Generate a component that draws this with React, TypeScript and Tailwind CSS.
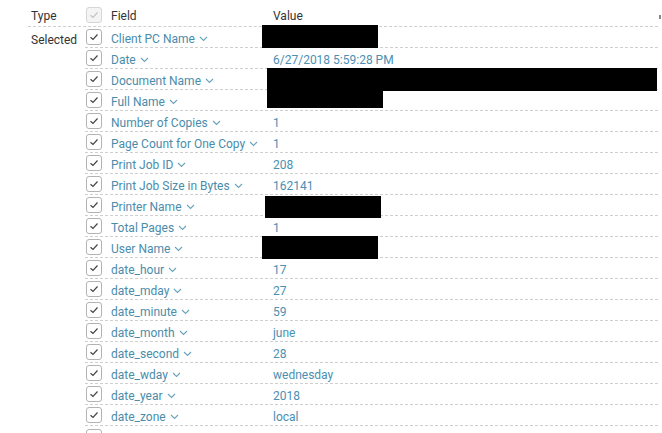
import React from "react";

const rows: [string, string][] = [
  ["Client PC Name", ""],
  ["Date", "6/27/2018 5:59:28 PM"],
  ["Document Name", ""],
  ["Full Name", ""],
  ["Number of Copies", "1"],
  ["Page Count for One Copy", "1"],
  ["Print Job ID", "208"],
  ["Print Job Size in Bytes", "162141"],
  ["Printer Name", ""],
  ["Total Pages", "1"],
  ["User Name", ""],
  ["date_hour", "17"],
  ["date_mday", "27"],
  ["date_minute", "59"],
  ["date_month", "june"],
  ["date_second", "28"],
  ["date_wday", "wednesday"],
  ["date_year", "2018"],
  ["date_zone", "local"],
];

function Check({ light }: { light?: boolean }) {
  return (
    <div
      className={
        "flex h-[16px] w-[16px] items-center justify-center rounded-[3px] border " +
        (light ? "border-[#d6d6d6] bg-[#f4f4f4]" : "border-[#b3b3b3] bg-white")
      }
    >
      <svg width="10" height="8" viewBox="0 0 10 8">
        <polyline
          points="1.5,4.2 4,6.5 8.5,1.5"
          fill="none"
          stroke={light ? "#c4c4c4" : "#444"}
          strokeWidth="1.2"
        />
      </svg>
    </div>
  );
}

function Chevron() {
  return (
    <svg width="9" height="6" viewBox="0 0 9 6" className="ml-[4px] mt-[1px]">
      <polyline points="1,1 4.5,4.5 8,1" fill="none" stroke="#6aa3bb" strokeWidth="1.1" />
    </svg>
  );
}

export default function App() {
  return (
    <div className="relative h-[433px] w-[662px] overflow-hidden bg-white font-['Roboto',sans-serif] text-[12px] leading-none">
      {/* header */}
      <div className="ml-[28px] flex h-[27px] w-[630px] items-center border-b border-dashed border-[#cfcfcf] pt-[3px] text-[#333]">
        <div className="w-[57px] pl-[3px] pt-[2px]">Type</div>
        <div className="w-[23px] pl-[1px]">
          <Check light />
        </div>
        <div className="w-[162px] pl-[3px] pt-[2px]">Field</div>
        <div className="pl-[3px] pt-[2px]">Value</div>
      </div>
      <div className="flex">
        <div className="ml-[28px] w-[57px] pl-[3px] pt-[7px] text-[#333]">Selected</div>
        <div className="w-[573px]">
          {rows.map(([f, v]) => (
            <div
              key={f}
              className="flex h-[21px] items-center border-b border-dashed border-[#cfcfcf]"
            >
              <div className="w-[23px] pl-[1px]">
                <Check />
              </div>
              <div className="flex w-[162px] items-center pl-[3px] pt-[3px] text-[#4a8cab]">
                {f}
                <Chevron />
              </div>
              <div className="pl-[3px] pt-[3px] text-[#4a90b2]">{v}</div>
            </div>
          ))}
          <div className="flex h-[21px] items-center">
            <div className="w-[23px] pl-[1px]">
              <Check />
            </div>
          </div>
        </div>
      </div>
      {/* redactions */}
      <div className="absolute left-[262px] top-[25px] h-[23px] w-[116px] bg-black" />
      <div className="absolute left-[267px] top-[68px] h-[23px] w-[390px] bg-black" />
      <div className="absolute left-[267px] top-[90px] h-[18px] w-[116px] bg-black" />
      <div className="absolute left-[265px] top-[196px] h-[22px] w-[116px] bg-black" />
      <div className="absolute left-[262px] top-[236px] h-[23px] w-[116px] bg-black" />
      <div className="absolute left-[659px] top-[15px] h-[4px] w-[2px] bg-[#888]" />
    </div>
  );
}
